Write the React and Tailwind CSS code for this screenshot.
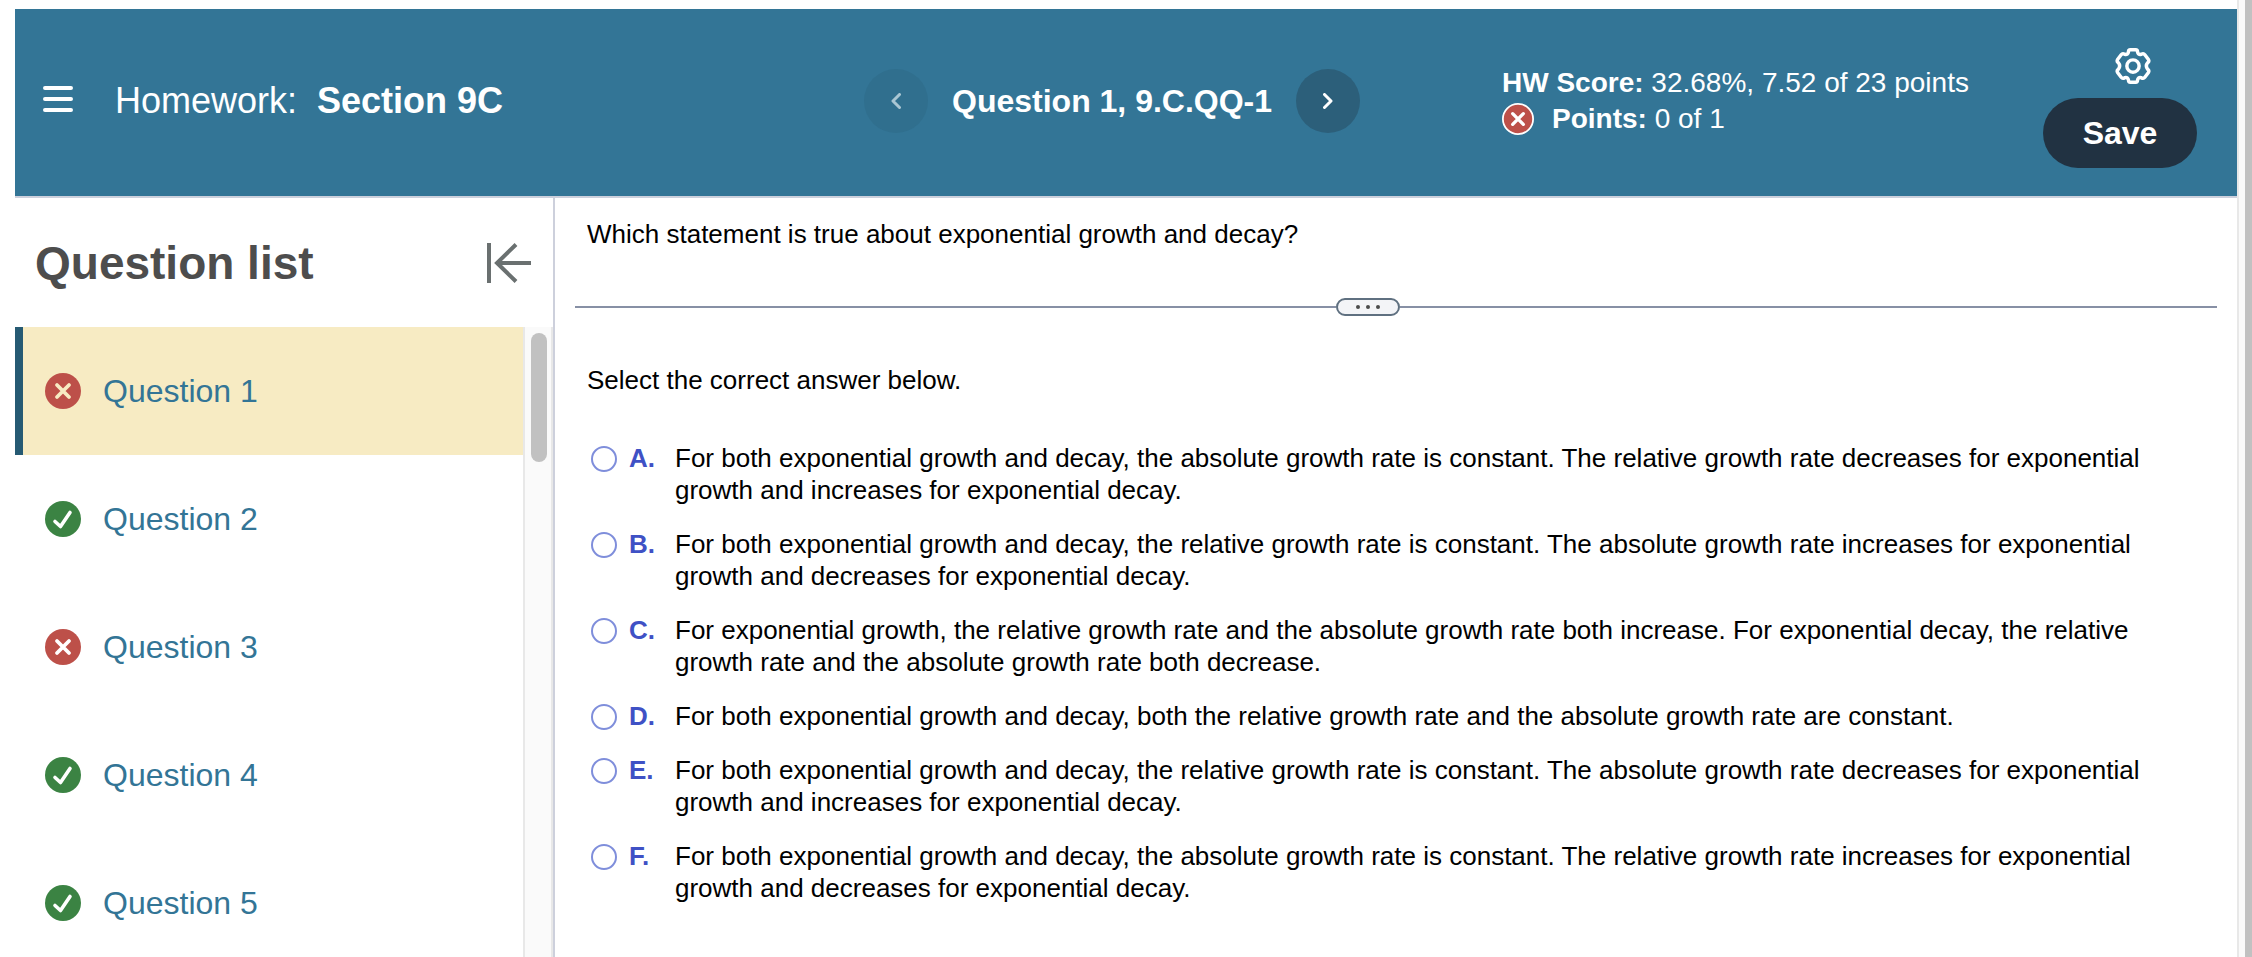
import React, { useState } from "react";

const questions = [
  { id: 1, label: "Question 1", correct: false },
  { id: 2, label: "Question 2", correct: true },
  { id: 3, label: "Question 3", correct: false },
  { id: 4, label: "Question 4", correct: true },
  { id: 5, label: "Question 5", correct: true },
];

const answers = [
  {
    letter: "A",
    text: "For both exponential growth and decay, the absolute growth rate is constant. The relative growth rate decreases for exponential growth and increases for exponential decay.",
  },
  {
    letter: "B",
    text: "For both exponential growth and decay, the relative growth rate is constant. The absolute growth rate increases for exponential growth and decreases for exponential decay.",
  },
  {
    letter: "C",
    text: "For exponential growth, the relative growth rate and the absolute growth rate both increase. For exponential decay, the relative growth rate and the absolute growth rate both decrease.",
  },
  {
    letter: "D",
    text: "For both exponential growth and decay, both the relative growth rate and the absolute growth rate are constant.",
  },
  {
    letter: "E",
    text: "For both exponential growth and decay, the relative growth rate is constant. The absolute growth rate decreases for exponential growth and increases for exponential decay.",
  },
  {
    letter: "F",
    text: "For both exponential growth and decay, the absolute growth rate is constant. The relative growth rate increases for exponential growth and decreases for exponential decay.",
  },
];

const WrongIcon = ({ className, mark = "#fff", ring }) => (
  <svg viewBox="0 0 36 36" className={className} aria-hidden="true">
    <circle cx="18" cy="18" r={ring ? 17 : 18} fill="#bd5049" stroke={ring ? "#fff" : "none"} strokeWidth="2" />
    <path d="M12 12l12 12M24 12l-12 12" stroke={mark} strokeWidth="3.8" strokeLinecap="round" />
  </svg>
);

const RightIcon = ({ className }) => (
  <svg viewBox="0 0 36 36" className={className} aria-hidden="true">
    <circle cx="18" cy="18" r="18" fill="#3b8343" />
    <path d="M10 20.500l5.500 5L25 11.500" fill="none" stroke="#fff" strokeWidth="3.6" strokeLinecap="round" strokeLinejoin="round" />
  </svg>
);

const Header = () => (
  <header className="grid grid-cols-[849fr_638fr_735fr] items-center h-[189px] bg-[#337596] border-b-2 border-[#cdd0dc] text-white shrink-0">
    <div className="flex items-center pl-7 pb-1">
      <button type="button" aria-label="Menu" className="w-[30px] mr-[42px] mb-1">
        <svg viewBox="0 0 30 26" className="block w-[30px] h-[26px]" stroke="#fff" strokeWidth="4" strokeLinecap="round">
          <path d="M2 2h26M2 13h26M2 24h26" />
        </svg>
      </button>
      <h1 className="flex gap-5 text-[36px] leading-10 whitespace-nowrap">
        Homework:
        <span className="font-bold">Section 9C</span>
      </h1>
    </div>

    <div className="flex items-center gap-6 pb-1">
      <button type="button" aria-label="Previous question" disabled className="flex items-center justify-center size-16 rounded-full bg-[#306f8e]">
        <svg viewBox="0 0 10 16" className="w-[10px] h-4" fill="none" stroke="#a9c6d3" strokeWidth="3" strokeLinecap="round" strokeLinejoin="round">
          <path d="M8.5 1.5L2 8l6.5 6.5" />
        </svg>
      </button>
      <h2 className="text-[32px] leading-10 font-bold whitespace-nowrap">Question 1, 9.C.QQ-1</h2>
      <button type="button" aria-label="Next question" className="flex items-center justify-center size-16 rounded-full bg-[#2c5f7a]">
        <svg viewBox="0 0 10 16" className="w-[10px] h-4" fill="none" stroke="#fff" strokeWidth="3" strokeLinecap="round" strokeLinejoin="round">
          <path d="M1.5 1.5L8 8l-6.5 6.5" />
        </svg>
      </button>
    </div>

    <div className="flex items-start justify-between pr-10">
      <div className="self-center pb-1 text-[28px] leading-9 whitespace-nowrap">
        <p>
          <span className="font-bold">HW Score:</span> 32.68%, 7.52 of 23 points
        </p>
        <p className="flex items-center">
          <WrongIcon ring className="size-8 mr-[18px]" />
          <span>
            <span className="font-bold">Points:</span> 0 of 1
          </span>
        </p>
      </div>
      <div className="flex flex-col items-end pt-[10px]">
        <button type="button" aria-label="Settings" className="mr-[46px] mb-[14px]">
          <svg viewBox="0 0 24 24" className="block size-9" fill="none" stroke="#fff" strokeWidth="2.3" strokeLinejoin="round">
            <circle cx="12" cy="12" r="4.1" />
            <path d="M9 2.5Q9 1.200 10.200 1.200h3.600Q15 1.200 15 2.500Q15.300 4.700 17.500 4.200Q19 3.300 19.900 4.500L22.300 7.700Q23 9 21.800 9.800Q20 12 21.800 14.200Q23 15 22.300 16.300L19.900 19.500Q19 20.700 17.500 19.800Q15.300 19.300 15 21.500Q15 22.800 13.800 22.800h-3.600Q9 22.800 9 21.500Q8.700 19.300 6.500 19.800Q5 20.700 4.100 19.500L1.700 16.300Q1 15 2.200 14.200Q4 12 2.200 9.800Q1 9 1.700 7.700L4.100 4.500Q5 3.300 6.500 4.200Q8.700 4.700 9 2.500Z" />
          </svg>
        </button>
        <button type="button" className="w-[154px] h-[70px] rounded-full bg-[#213242] text-[32px] font-bold">
          Save
        </button>
      </div>
    </div>
  </header>
);

const QuestionList = () => (
  <aside className="flex flex-col w-[540px] shrink-0 border-r-2 border-[#cdd0dc]">
    <div className="flex items-center justify-between h-[129px] pl-5 pr-[22px] shrink-0">
      <h2 className="text-[46px] leading-[52px] font-bold text-[#4d4d4d]">Question list</h2>
      <button type="button" aria-label="Collapse question list">
        <svg viewBox="0 0 44 40" className="block w-11 h-10" fill="none" stroke="#6a7070" strokeWidth="4">
          <path d="M2 0v40M44 20H10M29 1.500L10 20l19 18.500" />
        </svg>
      </button>
    </div>

    <div className="flex flex-1 min-h-0">
      <ul className="flex-1 overflow-hidden">
        {questions.map((q) => (
          <li key={q.id}>
            <a
              href={`#question-${q.id}`}
              className={`flex items-center h-32 border-l-8 pl-[22px] text-[32px] text-[#337596] ${
                q.id === 1 ? "bg-[#f7ebc3] border-[#265a73]" : "border-transparent"
              }`}
            >
              {q.correct ? <RightIcon className="size-9 mr-[22px]" /> : <WrongIcon mark={q.id === 1 ? "#f7ebc3" : "#fff"} className="size-9 mr-[22px]" />}
              {q.label}
            </a>
          </li>
        ))}
      </ul>
      {/* scrollbar */}
      <div className="w-[30px] border-x-2 border-[#e8e8e8] bg-[#fafafa] pl-[6px] pr-1 pt-[6px]">
        <div className="h-[129px] rounded-full bg-[#c1c1c1]" />
      </div>
    </div>
  </aside>
);

const QuestionContent = () => {
  const [selected, setSelected] = useState(null);

  return (
    <main className="flex-1 px-5 pt-5 text-[26px] leading-8 text-black overflow-hidden">
      <p className="pl-3">Which statement is true about exponential growth and decay?</p>

      {/* divider with the expand handle */}
      <div className="grid grid-cols-[761fr_64px_817fr] items-center h-[18px] mt-12">
        <div className="h-[2px] bg-[#8790a5]" />
        <button type="button" aria-label="Resize panels" className="flex items-center justify-center gap-[6px] h-[18px] rounded-full border-2 border-[#5f7080] bg-[#f3f4f7]">
          <span className="size-1 rounded-full bg-[#4b4b4b]" />
          <span className="size-1 rounded-full bg-[#4b4b4b]" />
          <span className="size-1 rounded-full bg-[#4b4b4b]" />
        </button>
        <div className="h-[2px] bg-[#8790a5]" />
      </div>

      <p className="pl-3 mt-12">Select the correct answer below.</p>

      <div role="radiogroup" aria-label="Answers" className="flex flex-col gap-[22px] mt-[46px] pl-4 pr-10">
        {answers.map((a) => (
          <label key={a.letter} className="flex items-start">
            <input
              type="radio"
              name="answer"
              value={a.letter}
              checked={selected === a.letter}
              onChange={() => setSelected(a.letter)}
              className="appearance-none size-[26px] mt-1 mr-3 shrink-0 rounded-full border-2 border-[#7f8edb] bg-white checked:bg-[#3f51c5]"
            />
            <span className="w-[46px] shrink-0 font-bold text-[#3f51c5]">{a.letter}.</span>
            <span>{a.text}</span>
          </label>
        ))}
      </div>
    </main>
  );
};

const App = () => {
  return (
    <div className="flex h-screen bg-white font-['Liberation_Sans',Arial,sans-serif]">
      <div className="flex flex-col flex-1 min-w-0 pl-[15px] pt-[9px]">
        <Header />
        <div className="flex flex-1 min-h-0">
          <QuestionList />
          <QuestionContent />
        </div>
      </div>
      {/* page scrollbar */}
      <div className="w-[15px] shrink-0 border-l-2 border-[#e8e8e8] bg-[#fafafa] pl-[6px]">
        <div className="h-full bg-[#c1c1c1]" />
      </div>
    </div>
  );
};

export default App;
